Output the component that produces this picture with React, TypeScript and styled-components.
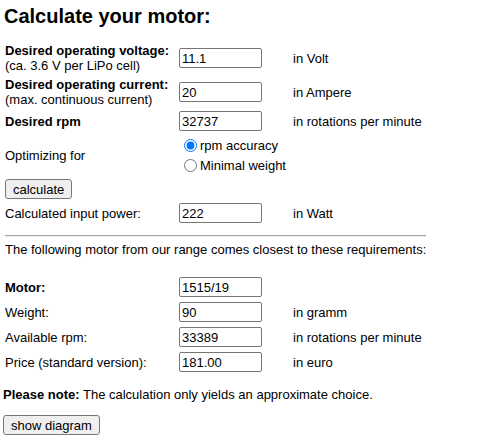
import React, { useState } from "react"
import styled, { createGlobalStyle } from "styled-components"

const GlobalStyle = createGlobalStyle`
body {
    margin: 0;
    background: #fff;
    color: #000;
    font-family: "Liberation Sans", Arial, sans-serif;
    font-size: 13px;
}
`

const Page = styled.div`
padding: 5px 3px;
`

const Title = styled.h2`
margin: 0;
padding-left: 1px;
font-size: 20px;
line-height: 23px;
font-weight: bold;
`

const FormGrid = styled.div<{ $gap: number; $top: number }>`
display: grid;
grid-template-columns: 174px 114px auto;
row-gap: ${p => p.$gap}px;
align-items: center;
margin-top: ${p => p.$top}px;
padding-left: 2px;
line-height: 15px;
`

const Label = styled.div<{ $bold?: boolean }>`
font-weight: ${p => (p.$bold ? "bold" : "normal")};
`

const Unit = styled.div``

const Field = styled.input`
box-sizing: border-box;
width: 83px;
height: 20px;
margin: 0;
padding: 1px 2px;
border: 1px solid #767676;
border-radius: 2px;
font-family: "Liberation Sans", Arial, sans-serif;
font-size: 13px;
color: #000;
background: #fff;
`

const RadioGroup = styled.div`
display: flex;
flex-direction: column;
`

const RadioOption = styled.label`
display: flex;
align-items: center;
height: 20px;
white-space: nowrap;

input {
    width: 13px;
    height: 13px;
    margin: 0 3px 0 5px;
    accent-color: #0075ff;
}
`

const Button = styled.button<{ $span?: boolean }>`
justify-self: start;
grid-column: ${p => (p.$span ? "1 / -1" : "auto")};
height: 20px;
padding: 0 7px;
border: 1px solid #767676;
border-radius: 3px;
background: #efefef;
color: #000;
font-family: "Liberation Sans", Arial, sans-serif;
font-size: 13px;
line-height: 15px;
`

const Intro = styled.div`
display: inline-block;
margin-top: 12px;
padding-left: 2px;
`

const Rule = styled.hr`
margin: 0;
height: 0;
border: none;
border-top: 1px solid #a4a4a4;
border-bottom: 1px solid #ececec;
`

const IntroText = styled.p`
margin: 5px 0 0;
line-height: 15px;
`

const Note = styled.p`
margin: 15px 0 0;
line-height: 15px;
`

const Footer = styled.div`
margin-top: 13px;
`

export default function App() {

    const [mode, setMode] = useState("rpm")

    return (
        <Page>
            <GlobalStyle />
            <Title>Calculate your motor:</Title>

            <FormGrid $gap={4} $top={15}>
                <Label>
                    <b>Desired operating voltage:</b><br />
                    (ca. 3.6 V per LiPo cell)
                </Label>
                <Field defaultValue="11.1" />
                <Unit>in Volt</Unit>

                <Label>
                    <b>Desired operating current:</b><br />
                    (max. continuous current)
                </Label>
                <Field defaultValue="20" />
                <Unit>in Ampere</Unit>

                <Label $bold>Desired rpm</Label>
                <Field defaultValue="32737" />
                <Unit>in rotations per minute</Unit>

                <Label>Optimizing for</Label>
                <RadioGroup>
                    <RadioOption>
                        <input type="radio" name="opt" checked={mode === "rpm"} onChange={() => setMode("rpm")} />
                        rpm accuracy
                    </RadioOption>
                    <RadioOption>
                        <input type="radio" name="opt" checked={mode === "weight"} onChange={() => setMode("weight")} />
                        Minimal weight
                    </RadioOption>
                </RadioGroup>
                <Unit />

                <Button $span>calculate</Button>

                <Label>Calculated input power:</Label>
                <Field defaultValue="222" />
                <Unit>in Watt</Unit>
            </FormGrid>

            <Intro>
                <Rule />
                <IntroText>The following motor from our range comes closest to these requirements:</IntroText>
            </Intro>

            <FormGrid $gap={5} $top={20}>
                <Label $bold>Motor:</Label>
                <Field defaultValue="1515/19" />
                <Unit />

                <Label>Weight:</Label>
                <Field defaultValue="90" />
                <Unit>in gramm</Unit>

                <Label>Available rpm:</Label>
                <Field defaultValue="33389" />
                <Unit>in rotations per minute</Unit>

                <Label>Price (standard version):</Label>
                <Field defaultValue="181.00" />
                <Unit>in euro</Unit>
            </FormGrid>

            <Note><b>Please note:</b> The calculation only yields an approximate choice.</Note>

            <Footer>
                <Button>show diagram</Button>
            </Footer>
        </Page>
    )
}
